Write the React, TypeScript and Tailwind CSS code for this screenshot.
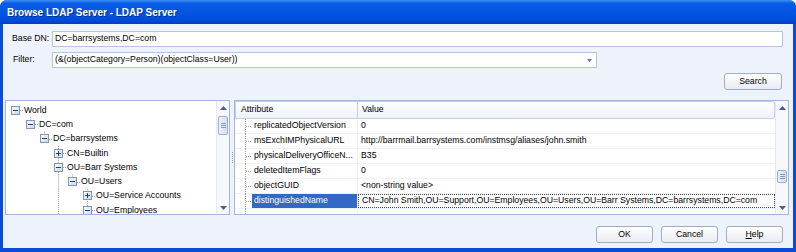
import React from "react";

const FONT = { fontFamily: '"Liberation Sans", Arial, sans-serif' };

interface TreeNode {
  label: string;
  level: number;
  open: boolean;
  above: boolean;
  below: boolean;
}

const TREE: TreeNode[] = [
  { label: "World", level: 0, open: true, above: false, below: false },
  { label: "DC=com", level: 1, open: true, above: true, below: false },
  { label: "DC=barrsystems", level: 2, open: true, above: true, below: false },
  { label: "CN=Builtin", level: 3, open: false, above: true, below: true },
  { label: "OU=Barr Systems", level: 3, open: true, above: true, below: true },
  { label: "OU=Users", level: 4, open: true, above: true, below: false },
  { label: "OU=Service Accounts", level: 5, open: false, above: true, below: true },
  { label: "OU=Employees", level: 5, open: true, above: true, below: true },
];

// rows below these indices keep a sibling line running at that level
const PASS_THROUGH: Record<number, number[]> = { 5: [3], 6: [3], 7: [3] };

const LEVEL_LEFT = [5, 20, 34, 48, 62, 77];
const LEVEL_PAD = ["pl-[5px]", "pl-[20px]", "pl-[34px]", "pl-[48px]", "pl-[62px]", "pl-[77px]"];
const ROW_H = 14.3;
const TOP = 2;

const ATTRS = [
  { name: "replicatedObjectVersion", value: "0" },
  { name: "msExchIMPhysicalURL", value: "http://barrmail.barrsystems.com/instmsg/aliases/john.smith" },
  { name: "physicalDeliveryOfficeN...", value: "B35" },
  { name: "deletedItemFlags", value: "0" },
  { name: "objectGUID", value: "<non-string value>" },
  {
    name: "distinguishedName",
    value: "CN=John Smith,OU=Support,OU=Employees,OU=Users,OU=Barr Systems,DC=barrsystems,DC=com",
    selected: true,
  },
];

function ExpandBox({ open }: { open: boolean }) {
  return (
    <svg width="9" height="9" viewBox="0 0 9 9" className="shrink-0">
      <defs>
        <linearGradient id="xbox" x1="0" y1="0" x2="1" y2="1">
          <stop offset="0" stopColor="#ffffff" />
          <stop offset="1" stopColor="#c9d5e8" />
        </linearGradient>
      </defs>
      <rect x="0.5" y="0.5" width="8" height="8" fill="url(#xbox)" stroke="#7c98bd" />
      <line x1="2" y1="4.5" x2="7" y2="4.5" stroke="#2b3f66" />
      {!open && <line x1="4.5" y1="2" x2="4.5" y2="7" stroke="#2b3f66" />}
    </svg>
  );
}

function TreeLines() {
  const segs: { x1: number; y1: number; x2: number; y2: number }[] = [];
  TREE.forEach((n, i) => {
    const top = TOP + ROW_H * i;
    const mid = top + ROW_H / 2;
    const x = LEVEL_LEFT[n.level] + 4.5;
    const y = Math.round(mid) + 0.5;
    if (n.above) segs.push({ x1: x, y1: top, x2: x, y2: y - 4.5 });
    if (n.below) segs.push({ x1: x, y1: y + 4.5, x2: x, y2: top + ROW_H });
    segs.push({ x1: LEVEL_LEFT[n.level] + 9, y1: y, x2: LEVEL_LEFT[n.level] + 12, y2: y });
    (PASS_THROUGH[i] || []).forEach((lv) => {
      const px = LEVEL_LEFT[lv] + 4.5;
      segs.push({ x1: px, y1: top, x2: px, y2: top + ROW_H });
    });
  });
  segs.push({ x1: LEVEL_LEFT[3] + 4.5, y1: TOP + ROW_H * 8, x2: LEVEL_LEFT[3] + 4.5, y2: 130 });
  segs.push({ x1: LEVEL_LEFT[5] + 4.5, y1: TOP + ROW_H * 8, x2: LEVEL_LEFT[5] + 4.5, y2: 130 });
  return (
    <svg className="absolute inset-0 pointer-events-none" width="100%" height="100%">
      {segs.map((s, k) => (
        <line key={k} {...s} stroke="#a3a3a3" strokeDasharray="1 1" />
      ))}
    </svg>
  );
}

function ScrollBar({ thumbTop, thumbH }: { thumbTop: string; thumbH: string }) {
  return (
    <div className="w-[13px] shrink-0 flex flex-col bg-[#f6f8fc] border-l border-[#e4e9f3]">
      <div className="h-[13px] flex items-center justify-center">
        <svg width="7" height="4" viewBox="0 0 7 4">
          <path d="M3.5 0 L7 4 L0 4 Z" fill="#4a5d82" />
        </svg>
      </div>
      <div className="flex-1 flex flex-col">
        <div
          className={[
            "mx-[1px] rounded-[2px] border border-[#9aaed2] bg-gradient-to-r from-[#eef3fc] to-[#d3dff3] flex flex-col items-center justify-center gap-[1px]",
            thumbTop,
            thumbH,
          ].join(" ")}
        >
          <div className="w-[5px] h-px bg-[#8197bf]" />
          <div className="w-[5px] h-px bg-[#8197bf]" />
          <div className="w-[5px] h-px bg-[#8197bf]" />
        </div>
      </div>
      <div className="h-[13px] flex items-center justify-center">
        <svg width="7" height="4" viewBox="0 0 7 4">
          <path d="M0 0 L7 0 L3.5 4 Z" fill="#4a5d82" />
        </svg>
      </div>
    </div>
  );
}

function Button({ children, className = "" }: { children: React.ReactNode; className?: string }) {
  return (
    <div
      className={[
        "h-[17px] w-[57px] rounded-[3px] border border-[#9fadc7] bg-gradient-to-b from-white to-[#e8ebf1] flex items-center justify-center text-black",
        className,
      ].join(" ")}
    >
      {children}
    </div>
  );
}

function AttrLines() {
  return (
    <svg width="17" height="15" viewBox="0 0 17 15" className="shrink-0">
      <line x1="10.5" y1="0" x2="10.5" y2="15" stroke="#a3a3a3" strokeDasharray="1 1" />
      <line x1="11" y1="7.5" x2="17" y2="7.5" stroke="#a3a3a3" strokeDasharray="1 1" />
    </svg>
  );
}

export default function App() {
  return (
    <div
      className="w-[796px] h-[252px] bg-[#0a4cd7] rounded-t-[7px] flex flex-col overflow-hidden text-[8.7px] text-black"
      style={FONT}
    >
      {/* Title bar */}
      <div className="h-[24px] shrink-0 flex items-center pl-[7px] bg-[linear-gradient(to_bottom,#3d8ff5,#0a5ce6_14%,#0055e3_55%,#0049d8_88%,#003fbf)]">
        <span className="text-white font-bold text-[10px] [text-shadow:1px_1px_0_#0a2f8a]">
          Browse LDAP Server - LDAP Server
        </span>
      </div>

      {/* Body */}
      <div className="flex-1 mx-[3px] mb-[4px] bg-[#eef2fa] flex flex-col">
        <div className="flex items-center mt-[7px] h-[16px]">
          <span className="w-[49px] pl-[9px] shrink-0">Base DN:</span>
          <div className="w-[731px] h-[16px] border border-[#b6c4e0] bg-white flex items-center pl-[2px]">
            DC=barrsystems,DC=com
          </div>
        </div>
        <div className="flex items-center mt-[5px] h-[16px]">
          <span className="w-[49px] pl-[10px] shrink-0">Filter:</span>
          <div className="w-[545px] h-[16px] border border-[#b6c4e0] bg-white flex items-center pl-[2px]">
            <span className="flex-1">(&amp;(objectCategory=Person)(objectClass=User))</span>
            <svg width="5" height="3" viewBox="0 0 5 3" className="mr-[4px]">
              <path d="M0 0 H5 L2.5 3 Z" fill="#5a74a8" />
            </svg>
          </div>
        </div>
        <div className="flex justify-end mt-[5px] pr-[11px]">
          <Button className="w-[58px]">Search</Button>
        </div>

        {/* Panels */}
        <div className="flex mt-[10px] ml-[2px] mr-[4px] h-[115px]">
          {/* Tree */}
          <div className="w-[225px] border border-[#a2b5da] bg-white flex">
            <div className="relative flex-1 overflow-hidden pt-[2px]">
              <TreeLines />
              {TREE.map((n) => (
                <div key={n.label} className={["relative h-[14.3px] flex items-center", LEVEL_PAD[n.level]].join(" ")}>
                  <ExpandBox open={n.open} />
                  <span className="ml-[4px] whitespace-nowrap">{n.label}</span>
                </div>
              ))}
            </div>
            <ScrollBar thumbTop="mt-[2px]" thumbH="h-[19px]" />
          </div>

          {/* Splitter */}
          <div className="w-[4px] flex flex-col items-center justify-center gap-[1px]">
            <div className="w-px h-px bg-[#8fa3c8]" />
            <div className="w-px h-px bg-[#8fa3c8]" />
            <div className="w-px h-px bg-[#8fa3c8]" />
            <div className="w-px h-px bg-[#8fa3c8]" />
            <div className="w-px h-px bg-[#8fa3c8]" />
            <div className="w-px h-px bg-[#8fa3c8]" />
          </div>

          {/* Attribute list */}
          <div className="flex-1 border border-[#a2b5da] bg-white flex">
            <div className="flex-1 flex flex-col overflow-hidden">
              <div className="h-[18px] shrink-0 flex border border-[#c3cfe7] rounded-r-[2px] bg-gradient-to-b from-white to-[#edf1f9]">
                <div className="w-[122px] pl-[5px] flex items-center border-r border-[#c3cfe7]">Attribute</div>
                <div className="flex-1 pl-[4px] flex items-center">Value</div>
              </div>
              {ATTRS.map((a) => (
                <div key={a.name} className="h-[15px] shrink-0 flex border-b border-[#eef1f7]">
                  <div className="w-[123px] shrink-0 flex items-stretch border-r border-[#eef1f7]">
                    <AttrLines />
                    <div
                      className={[
                        "flex-1 flex items-center pl-[2px] whitespace-nowrap",
                        a.selected ? "bg-[#316ac5] text-white" : "",
                      ].join(" ")}
                    >
                      {a.name}
                    </div>
                  </div>
                  <div
                    className={[
                      "flex-1 flex items-center pl-[3px] whitespace-nowrap",
                      a.selected ? "border border-dotted border-[#444]" : "",
                    ].join(" ")}
                  >
                    {a.value}
                  </div>
                </div>
              ))}
              {/* partially visible next row */}
              <div className="h-[15px] shrink-0 flex">
                <div className="w-[123px] shrink-0 flex border-r border-[#eef1f7]">
                  <AttrLines />
                </div>
              </div>
            </div>
            <ScrollBar thumbTop="mt-[56px]" thumbH="h-[13px]" />
          </div>
        </div>

        {/* Buttons */}
        <div className="flex justify-end gap-[8px] mt-[11px] pr-[10px]">
          <Button>OK</Button>
          <Button>Cancel</Button>
          <Button>
            <span>
              <span className="underline">H</span>elp
            </span>
          </Button>
        </div>
      </div>
    </div>
  );
}
